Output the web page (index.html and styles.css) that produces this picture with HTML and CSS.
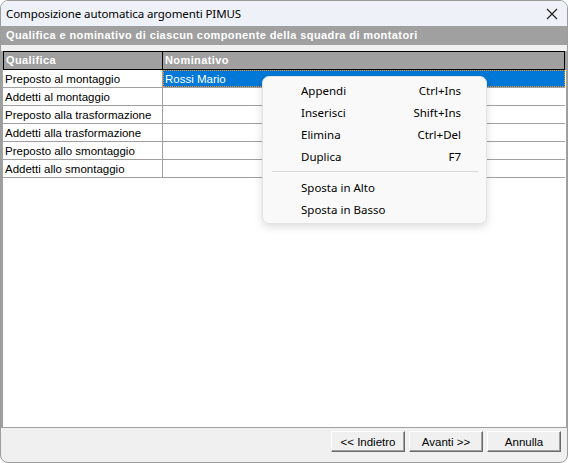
FILE: index.html
```html
<!DOCTYPE html>
<html>
<head>
<meta charset="utf-8">
<link rel="stylesheet" href="styles.css">
</head>
<body>
<div class="window">
  <div class="titlebar">
    <span class="title">Composizione automatica argomenti PIMUS</span>
    <svg class="close" width="12" height="12" viewBox="0 0 12 12"><path d="M1 1 L11 11 M11 1 L1 11" stroke="#1a1a1a" stroke-width="1.1" fill="none"/></svg>
  </div>
  <div class="band">Qualifica e nominativo di ciascun componente della squadra di montatori</div>
  <div class="gap"></div>
  <div class="grid">
    <div class="hrow">
      <div class="hcell c1">Qualifica</div>
      <div class="hcell c2">Nominativo</div>
    </div>
    <div class="row"><div class="cell c1">Preposto al montaggio</div><div class="cell c2 sel">Rossi Mario</div></div>
    <div class="row"><div class="cell c1">Addetti al montaggio</div><div class="cell c2"></div></div>
    <div class="row"><div class="cell c1">Preposto alla trasformazione</div><div class="cell c2"></div></div>
    <div class="row"><div class="cell c1">Addetti alla trasformazione</div><div class="cell c2"></div></div>
    <div class="row"><div class="cell c1">Preposto allo smontaggio</div><div class="cell c2"></div></div>
    <div class="row"><div class="cell c1">Addetti allo smontaggio</div><div class="cell c2"></div></div>
  </div>
  <div class="footer">
    <button class="btn">&lt;&lt; Indietro</button>
    <button class="btn">Avanti &gt;&gt;</button>
    <button class="btn">Annulla</button>
  </div>
  <div class="menu">
    <div class="mi"><span>Appendi</span><span>Ctrl+Ins</span></div>
    <div class="mi"><span>Inserisci</span><span>Shift+Ins</span></div>
    <div class="mi"><span>Elimina</span><span>Ctrl+Del</span></div>
    <div class="mi"><span>Duplica</span><span>F7</span></div>
    <div class="sep"></div>
    <div class="mi"><span>Sposta in Alto</span><span></span></div>
    <div class="mi"><span>Sposta in Basso</span><span></span></div>
  </div>
</div>
</body>
</html>
```
FILE: styles.css
```css
* { box-sizing: border-box; }
html, body { margin: 0; padding: 0; background: #ffffff; }
.window {
  position: relative;
  width: 568px;
  height: 463px;
  border: 1px solid #9c9c9c;
  border-radius: 8px;
  overflow: hidden;
  background: #f0f0f0;
  display: flex;
  flex-direction: column;
}
.titlebar {
  height: 25px;
  flex: none;
  background: #eef2f8;
  display: flex;
  align-items: center;
  justify-content: space-between;
  padding: 0 9px 0 5px;
}
.title {
  font-family: "Noto Sans", sans-serif;
  font-size: 11.5px;
  color: #000;
  letter-spacing: -0.1px;
}
.close { display: block; margin-top: 1px; }
.band {
  height: 19px;
  flex: none;
  background: #a0a0a0;
  color: #fff;
  font-family: "Liberation Sans", Arial, sans-serif;
  font-weight: bold;
  font-size: 11px;
  line-height: 19px;
  padding-left: 5px;
  letter-spacing: 0.4px;
}
.gap { height: 6px; flex: none; }
.grid {
  flex: 1;
  background: #fff;
  border-left: 2px solid #a0a0a0;
  border-right: 1px solid #a0a0a0;
  font-family: "Liberation Sans", Arial, sans-serif;
  font-size: 11.5px;
}
.hrow {
  display: flex;
  background: #a0a0a0;
  height: 19px;
  padding-right: 1px;
}
.hcell {
  border: 1px solid #000;
  color: #fff;
  font-weight: bold;
  font-size: 11px;
  line-height: 17px;
  padding-left: 2px;
  letter-spacing: 0.4px;
}
.hcell.c2 { border-left: none; }
.c1 { width: 160px; flex: none; }
.c2 { flex: 1; }
.row {
  display: flex;
  height: 18px;
  border-bottom: 1px solid #a0a0a0;
  margin-right: 1px;
}
.cell {
  line-height: 18px;
  padding-left: 2px;
  color: #000;
}
.cell.c1 { border-right: 1px solid #a0a0a0; }
.cell.sel {
  background: #0078d7;
  color: #fff;
  outline: 1px dotted #ff8c1a;
  outline-offset: -1px;
}
.footer {
  height: 35px;
  flex: none;
  border-top: 1px solid #a0a0a0;
  display: flex;
  justify-content: flex-end;
  align-items: flex-start;
  gap: 4px;
  padding: 3px 6px 0 0;
}
.btn {
  width: 74px;
  height: 21px;
  background: #f0f0f0;
  border: 1px solid;
  border-color: #ffffff #696969 #696969 #ffffff;
  box-shadow: inset -1px -1px 0 #a0a0a0;
  font-family: "Liberation Sans", Arial, sans-serif;
  font-size: 11.5px;
  color: #000;
  padding: 0;
}
.menu {
  position: absolute;
  left: 261px;
  top: 75px;
  width: 225px;
  padding: 2px 0 3px 0;
  background: #f9f9f9;
  border: 1px solid #e3e3e3;
  border-radius: 7px;
  box-shadow: 0 3px 8px rgba(0,0,0,0.14);
  font-family: "Noto Sans", sans-serif;
  font-size: 11.5px;
  color: #000;
}
.mi {
  height: 22px;
  display: flex;
  align-items: center;
  justify-content: space-between;
  padding: 0 25px 0 38px;
}
.sep {
  height: 1px;
  background: #d6d6d6;
  margin: 4px 8px 4px 9px;
}
```
